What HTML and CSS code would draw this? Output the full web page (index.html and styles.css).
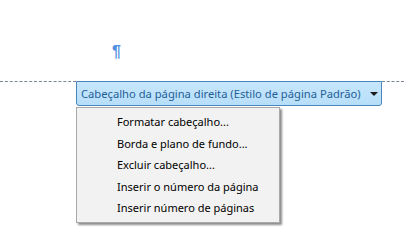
FILE: index.html
```html
<!DOCTYPE html>
<html lang="pt">
<head>
<meta charset="utf-8">
<link rel="stylesheet" href="styles.css">
</head>
<body>
<div class="page">
  <div class="para"><span class="pilcrow">¶</span></div>
  <div class="header-row">
    <div class="rule rule-left"></div>
    <div class="tab">
      <span class="tab-label">Cabeçalho da página direita (Estilo de página Padrão)</span>
      <span class="caret"></span>
    </div>
    <div class="rule rule-right"></div>
  </div>
  <ul class="menu">
    <li class="item">Formatar cabeçalho...</li>
    <li class="item">Borda e plano de fundo...</li>
    <li class="item">Excluir cabeçalho...</li>
    <li class="item">Inserir o número da página</li>
    <li class="item">Inserir número de páginas</li>
  </ul>
</div>
</body>
</html>
```
FILE: styles.css
```css
html, body {
  margin: 0;
  padding: 0;
  background: #ffffff;
}
.page {
  width: 404px;
  height: 246px;
  font-family: "Noto Sans", "Open Sans", sans-serif;
  font-size: 11px;
}
.para {
  height: 81px;
  padding-left: 112px;
  box-sizing: border-box;
  padding-top: 42px;
}
.pilcrow {
  display: block;
  font-family: "Liberation Sans", sans-serif;
  font-size: 16px;
  line-height: 20px;
  color: #4f8ee0;
  font-weight: bold;
}
.header-row {
  display: flex;
  align-items: flex-start;
  height: 26px;
}
.rule {
  border-top: 1px dashed #7a8696;
}
.rule-left { width: 76px; }
.rule-right { flex: 1; }
.tab {
  width: 306px;
  height: 25px;
  box-sizing: border-box;
  border: 1px solid #4a86bb;
  border-radius: 0 0 3px 3px;
  background: linear-gradient(#c6e7fc, #b7def9);
  display: flex;
  align-items: center;
  padding-left: 4px;
  padding-right: 3px;
  color: #1f5f99;
  font-size: 11.2px;
}
.tab-label {
  flex: 1;
  white-space: nowrap;
  line-height: 16px;
}
.caret {
  width: 0;
  height: 0;
  border-left: 4px solid transparent;
  border-right: 4px solid transparent;
  border-top: 4px solid #1a1a1a;
  margin-top: 1px;
}
.menu {
  list-style: none;
  margin: 0 0 0 76px;
  padding: 3px 0 3px 0;
  width: 204px;
  box-sizing: border-box;
  background: #f2f2f2;
  border: 1px solid #a8a8a8;
  box-shadow: 2px 2px 2px rgba(0, 0, 0, 0.45);
  color: #000;
}
.item {
  height: 21.5px;
  line-height: 21.5px;
  padding-left: 40px;
  white-space: nowrap;
}
```
